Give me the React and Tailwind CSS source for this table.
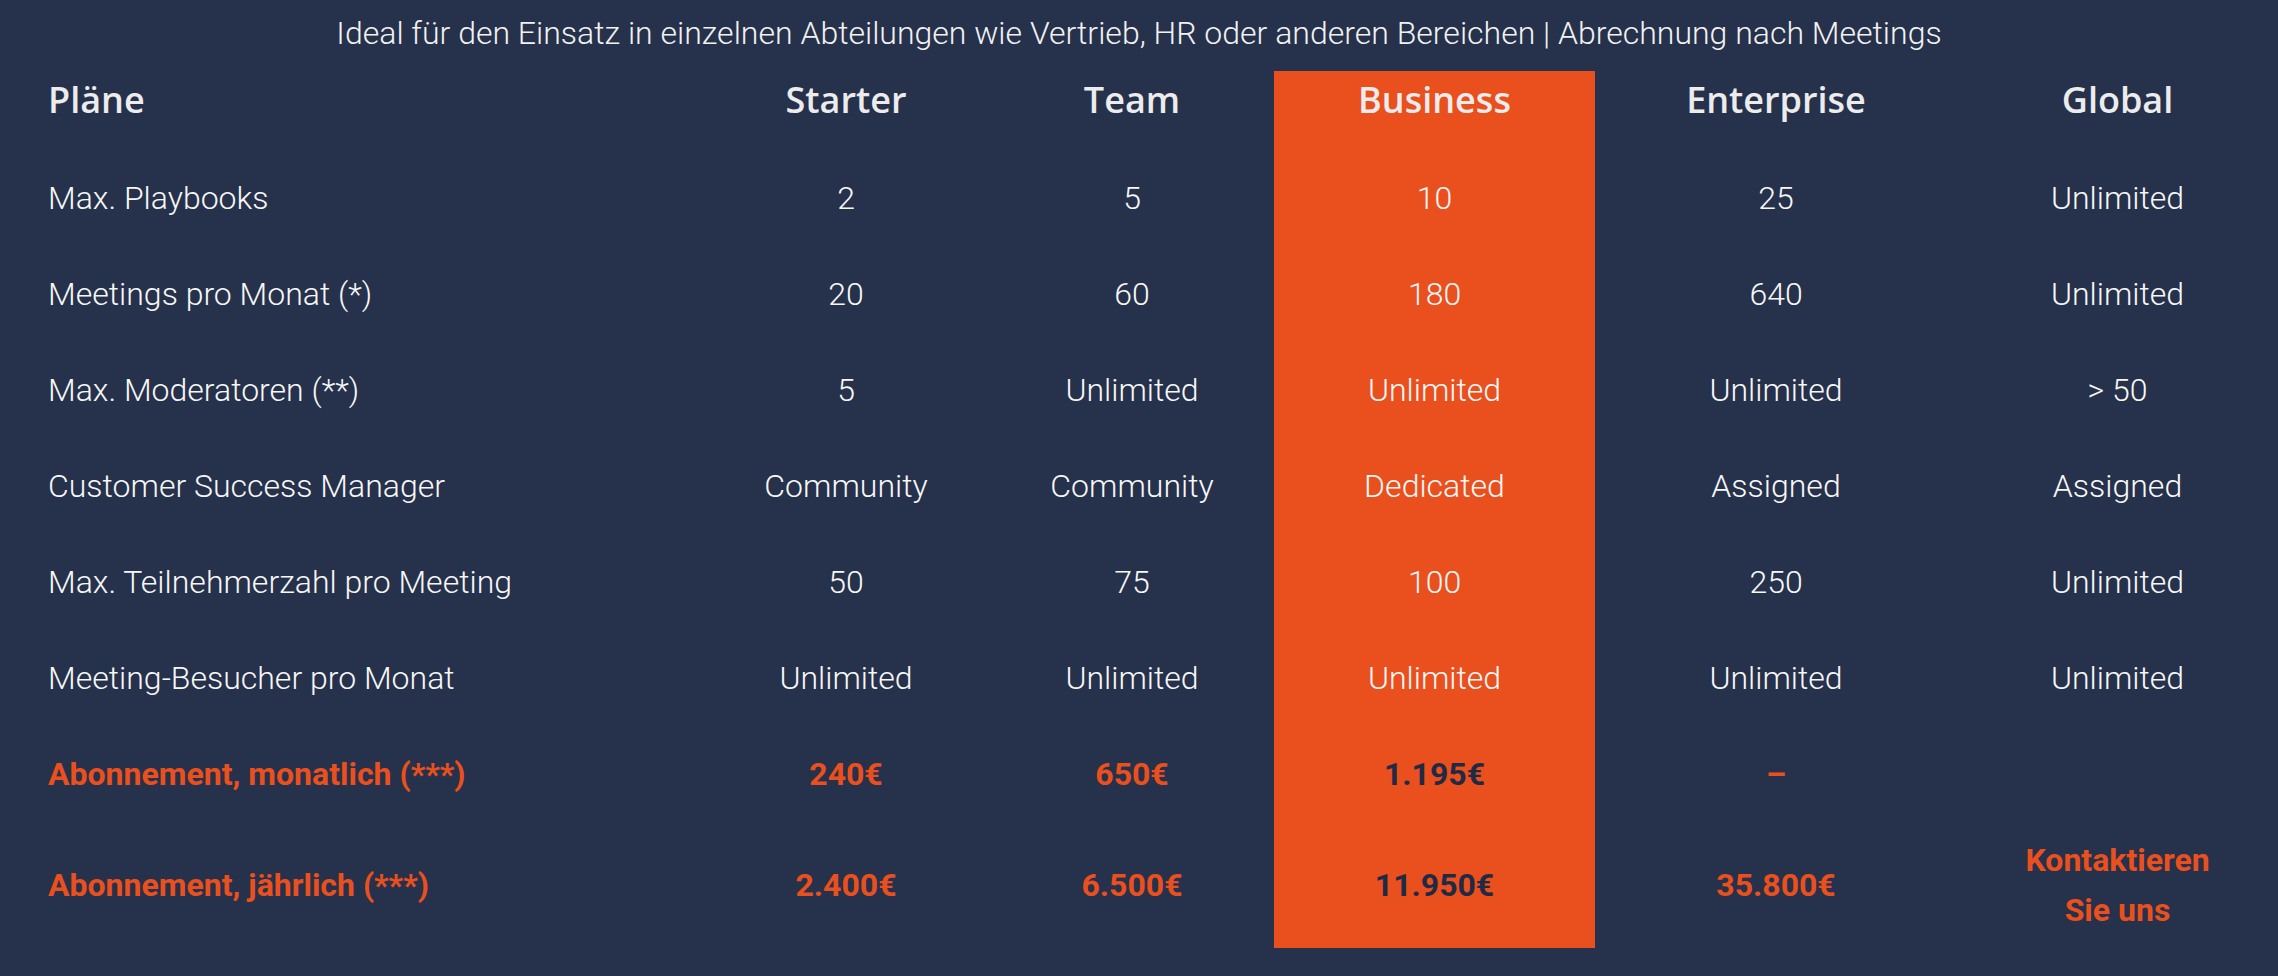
import React from "react";

const cols = "grid grid-cols-[702px_288px_284px_321px_362px_321px]";

const rows = [
  ["Max. Playbooks", "2", "5", "10", "25", "Unlimited"],
  ["Meetings pro Monat (*)", "20", "60", "180", "640", "Unlimited"],
  ["Max. Moderatoren (**)", "5", "Unlimited", "Unlimited", "Unlimited", "> 50"],
  ["Customer Success Manager", "Community", "Community", "Dedicated", "Assigned", "Assigned"],
  ["Max. Teilnehmerzahl pro Meeting", "50", "75", "100", "250", "Unlimited"],
  ["Meeting-Besucher pro Monat", "Unlimited", "Unlimited", "Unlimited", "Unlimited", "Unlimited"],
];

const roboto = { fontFamily: "Roboto, 'Liberation Sans', sans-serif" };
const heading = { fontFamily: "'Open Sans', 'Liberation Sans', sans-serif" };

export default function App() {
  return (
    <div className="w-[2278px] h-[976px] bg-[#26314b] overflow-hidden" style={roboto}>
      <div className="h-[71px] pb-[5px] flex items-center justify-center">
        <p className="text-[32px] font-light text-[#f2f2f2] leading-[38px]">
          Ideal für den Einsatz in einzelnen Abteilungen wie Vertrieb, HR oder anderen Bereichen | Abrechnung nach Meetings
        </p>
      </div>

      {/* header */}
      <div className={`${cols} h-[79px]`} style={heading}>
        {["Pläne", "Starter", "Team", "Business", "Enterprise", "Global"].map((h, i) => (
          <div
            key={h}
            className={`pb-[21px] flex items-center text-[36px] font-semibold text-[#ececec] leading-[42px] ${
              i === 0 ? "justify-start pl-[48px]" : "justify-center"
            } ${i === 3 ? "bg-[#e9501e]" : ""}`}
          >
            {h}
          </div>
        ))}
      </div>

      {rows.map((r) => (
        <div key={r[0]} className={`${cols} h-[96px]`}>
          {r.map((c, i) => (
            <div
              key={i}
              className={`flex items-center text-[32px] font-light text-[#f7f7f7] leading-[38px] ${
                i === 0 ? "justify-start pl-[48px]" : "justify-center"
              } ${i === 3 ? "bg-[#e9501e]" : ""}`}
            >
              {c}
            </div>
          ))}
        </div>
      ))}

      {/* monthly */}
      <div className={`${cols} h-[96px] text-[32px] font-bold leading-[38px] text-[#e9501e]`}>
        <div className="flex items-center pl-[48px]">Abonnement, monatlich (***)</div>
        <div className="flex items-center justify-center">240€</div>
        <div className="flex items-center justify-center">650€</div>
        <div className="flex items-center justify-center bg-[#e9501e] text-[#1f2a44]">1.195€</div>
        <div className="flex items-center justify-center">–</div>
        <div />
      </div>

      {/* yearly */}
      <div className={`${cols} h-[126px] text-[32px] font-bold leading-[38px] text-[#e9501e]`}>
        <div className="flex items-center pl-[48px]">Abonnement, jährlich (***)</div>
        <div className="flex items-center justify-center">2.400€</div>
        <div className="flex items-center justify-center">6.500€</div>
        <div className="flex items-center justify-center bg-[#e9501e] text-[#1f2a44]">11.950€</div>
        <div className="flex items-center justify-center">35.800€</div>
        <div className="flex items-center justify-center text-center leading-[50px]">
          Kontaktieren
          <br />
          Sie uns
        </div>
      </div>
    </div>
  );
}
